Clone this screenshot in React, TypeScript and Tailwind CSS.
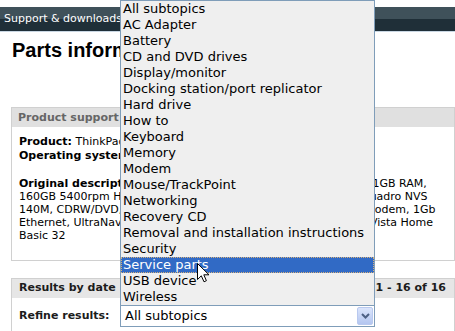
const topics = [
  "All subtopics",
  "AC Adapter",
  "Battery",
  "CD and DVD drives",
  "Display/monitor",
  "Docking station/port replicator",
  "Hard drive",
  "How to",
  "Keyboard",
  "Memory",
  "Modem",
  "Mouse/TrackPoint",
  "Networking",
  "Recovery CD",
  "Removal and installation instructions",
  "Security",
  "Service parts",
  "USB device",
  "Wireless",
];

const selected = "Service parts";

export default function App() {
  return (
    <div className="relative h-[331px] w-[455px] overflow-hidden bg-white font-['DejaVu_Sans',Verdana,sans-serif] text-[11px] text-black">
      <div className="pt-[7px]">
        <div className="h-[25px] border-b border-[#c9d7e3] bg-[linear-gradient(to_bottom,#3f515a_50%,#1f2f38_50%)] pl-[4px] leading-[24px] text-white">
          Support &amp; downloads
        </div>
      </div>

      <h1 className="ml-[12px] mt-[6px] font-['Liberation_Sans',Arial,sans-serif] text-[20px] leading-[24px] font-bold">
        Parts information
      </h1>

      <div className="ml-[11px] mt-[45px] border border-[#d0d0d0]">
        <div className="h-[19px] bg-[#e0e0e0] pl-[6px] font-bold leading-[19px] text-[#666]">
          Product support
        </div>
        <div className="px-[7px] pb-[18px] pt-[8px]">
          <div className="leading-[14px]">
            <b>Product:</b> ThinkPad T61 - Type 7662
          </div>
          <div className="leading-[14px]">
            <b>Operating system:</b> Windows Vista Home Basic
          </div>
          <div className="mt-[14px] whitespace-nowrap leading-[13px]">
            <b>Original description:</b> T61, C2D T7300 2.0GHz, 14.1 in WXGA, 1GB RAM,
            <br />
            160GB 5400rpm HDD, DVD Multi, Intel 802.11a/b/g/n, NVIDIA Quadro NVS
            <br />
            140M, CDRW/DVD, Bluetooth, fingerprint reader, TPM 1.2, 56k Modem, 1Gb
            <br />
            Ethernet, UltraNav, PC Card, ExpressCard, IEEE 1394, Windows Vista Home
            <br />
            Basic 32
          </div>
        </div>
      </div>

      <div className="ml-[11px] mt-[17px] border border-[#d0d0d0]">
        <div className="flex h-[19px] items-center justify-between bg-[#e6e6e6] pl-[7px] pr-[8px] font-bold text-[#1c1c1c]">
          <span>Results by date</span>
          <span>1 - 16 of 16</span>
        </div>
        <div className="flex items-center pb-[10px] pl-[7px] pt-[7px]">
          <span className="w-[101px] font-bold text-[#1c1c1c]">Refine results:</span>
          <div className="relative h-[22px] w-[255px] border border-[#7f9db9] bg-white pl-[4px] text-[13px] leading-[20px]">
            All subtopics
            <div className="absolute right-[1px] top-[1px] flex h-[18px] w-[16px] items-center justify-center rounded-[2px] border border-[#b9c9ef] bg-[linear-gradient(to_bottom,#dbe5fc,#b4c6f0)]">
              <svg width="9" height="6" viewBox="0 0 9 6" fill="none" stroke="#4d6185" strokeWidth="2">
                <path d="M1 1l3.5 3.5L8 1" />
              </svg>
            </div>
          </div>
        </div>
      </div>

      <ul className="absolute left-[120px] top-0 w-[255px] border border-[#7f9db9] bg-[#efefef] text-[13px] leading-[16px] text-black">
        {topics.map((t) => (
          <li
            key={t}
            className={
              t === selected
                ? "h-[16px] whitespace-nowrap bg-[#316ac5] pl-[2px] text-white outline-1 -outline-offset-1 outline-dotted outline-[#d6b07a]"
                : "h-[16px] whitespace-nowrap pl-[2px]"
            }
          >
            {t}
          </li>
        ))}
      </ul>

      <svg
        className="absolute left-[197px] top-[263px]"
        width="13"
        height="20"
        viewBox="0 0 13 20"
      >
        <path
          d="M0.5 0.5V16.5L4.3 12.8L7 18.8L9.4 17.7L6.8 11.8H12Z"
          fill="white"
          stroke="black"
          strokeWidth="1"
          strokeLinejoin="miter"
        />
      </svg>
    </div>
  );
}
